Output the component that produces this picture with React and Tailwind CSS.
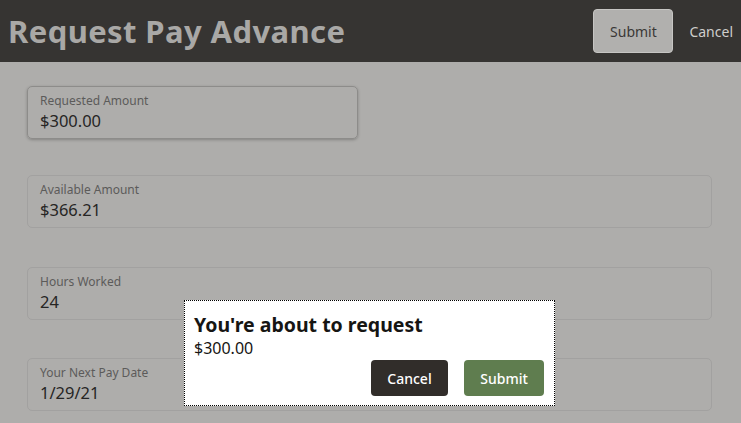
import { useState } from 'react'

const font = { fontFamily: '"Noto Sans", "Open Sans", sans-serif' }

function Field({ label, value, active, narrow, className = '' }) {
  return (
    <div
      className={`h-[53px] rounded-[5px] border px-3 pt-[6px] ${narrow ? 'w-[331px]' : 'w-[685px]'} ${
        active ? 'border-[#8d8c8a] shadow-[0_1px_3px_rgba(0,0,0,0.25)]' : 'border-[#a2a1a0]'
      } ${className}`}
    >
      <div className="text-[12px] leading-[16px] text-[#5c5b5a]">{label}</div>
      <div className="text-[16.5px] leading-[24px] text-[#262524]">{value}</div>
    </div>
  )
}

export default function App() {
  const [open, setOpen] = useState(true)

  return (
    <div className="relative h-[423px] w-[741px] overflow-hidden bg-[#aeadab]" style={font}>
      {/* Header */}
      <div className="flex h-[62px] items-center justify-between bg-[#363432] pl-[8px] pr-[8px]">
        <h1 className="text-[31px] font-bold tracking-[0.4px] text-[#a9a8a6]">Request Pay Advance</h1>
        <div className="flex items-center gap-[16px]">
          <button className="h-[44px] w-[80px] rounded-[4px] border border-[#c6c5c3] bg-[#b1b0ae] text-[14px] text-[#3a3836]">
            Submit
          </button>
          <button className="text-[14px] text-[#cfcecc]">Cancel</button>
        </div>
      </div>

      {/* Form */}
      <div className="flex flex-col pl-[27px] pt-[24px]">
        <Field label="Requested Amount" value="$300.00" active narrow />
        <Field label="Available Amount" value="$366.21" className="mt-[36px]" />
        <Field label="Hours Worked" value="24" className="mt-[39px]" />
        <Field label="Your Next Pay Date" value="1/29/21" className="mt-[38px]" />
      </div>

      {/* Confirm dialog */}
      {open && (
        <div className="absolute left-[184px] top-[300px] h-[106px] w-[371px] border border-dotted border-black bg-white px-[9px] pt-[12px]">
          <div className="text-[19.5px] font-bold leading-[24px] text-[#161513]">You're about to request</div>
          <div className="text-[16px] leading-[22px] text-[#161513]">$300.00</div>
          <div className="mt-[1px] flex justify-end gap-[16px] pr-[1px]">
            <button
              onClick={() => setOpen(false)}
              className="h-[36px] w-[77px] rounded-[4px] bg-[#312d2a] text-[14px] font-medium text-white"
            >
              Cancel
            </button>
            <button
              onClick={() => setOpen(false)}
              className="h-[36px] w-[80px] rounded-[4px] bg-[#5f7d4f] text-[14px] font-medium text-white"
            >
              Submit
            </button>
          </div>
        </div>
      )}
    </div>
  )
}
